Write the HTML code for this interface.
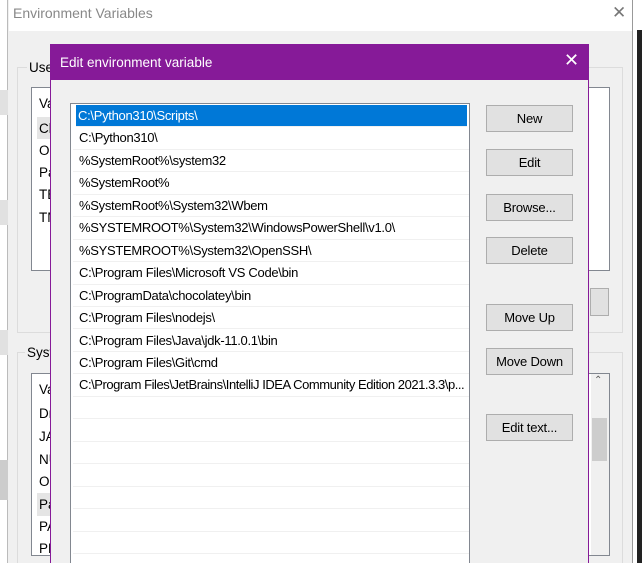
<!DOCTYPE html>
<html style="overflow:hidden;height:563px"><head><meta charset="utf-8"><style>
*{margin:0;padding:0;box-sizing:border-box}
body{width:642px;height:563px;overflow:hidden;position:relative;background:#f0f0f0;font-family:"Liberation Sans",sans-serif;font-size:12px;color:#000}
.a{position:absolute}
.t{white-space:nowrap}
.btn{position:absolute;left:486px;width:87px;height:27px;background:#e1e1e1;border:1px solid #adadad;text-align:center;line-height:25px;font-size:13px;letter-spacing:-0.2px}
.row{position:absolute;left:2px;width:396px;height:22.45px;border-bottom:1px solid #f0f0f0;line-height:22px;padding-left:6px;white-space:nowrap;overflow:hidden;letter-spacing:-0.3px;font-size:13px}
.bg{position:absolute;left:39px;white-space:nowrap;font-size:13.5px}
</style></head><body>
<div class="a" style="left:0;top:0;width:8px;height:563px;background:#fff;border-right:1px solid #bbb"></div>
<div class="a" style="left:0;top:90px;width:8px;height:25px;background:#e1e1e1"></div>
<div class="a" style="left:0;top:200px;width:8px;height:25px;background:#e1e1e1"></div>
<div class="a" style="left:0;top:330px;width:8px;height:25px;background:#e1e1e1"></div>
<div class="a" style="left:0;top:460px;width:8px;height:40px;background:#ccc"></div>
<div class="a" style="left:9px;top:0;width:623px;height:563px;background:#f0f0f0"></div>
<div class="a" style="left:9px;top:0;width:623px;height:31px;background:#fff"></div>
<div class="a t" style="left:13px;top:5px;font-size:14px;color:#888">Environment Variables</div>
<div class="a" style="left:612px;top:3px;font-size:17px;color:#777">✕</div>
<div class="a" style="left:632px;top:0;width:10px;height:563px;background:#fff;border-left:1px solid #999"></div>
<div class="a" style="left:637px;top:30px;width:5px;height:533px;background:#222"></div>
<div class="a" style="left:17px;top:67px;width:606px;height:266px;border:1px solid #dcdcdc"></div>
<div class="a t" style="left:27px;top:60px;background:#f0f0f0;padding:0 2px;font-size:13.5px">User</div>
<div class="a" style="left:31px;top:87px;width:579px;height:184px;background:#fff;border:1px solid #828790"></div>
<div class="bg" style="top:96px">Va</div>
<div class="a" style="left:37px;top:117px;width:20px;height:22px;background:#e5e5e5"></div>
<div class="bg" style="top:121px">Ch</div>
<div class="bg" style="top:143px">Or</div>
<div class="bg" style="top:165px">Pa</div>
<div class="bg" style="top:187px">TE</div>
<div class="bg" style="top:210px">TM</div>
<div class="a" style="left:590px;top:288px;width:19px;height:28px;background:#e1e1e1;border:1px solid #adadad"></div>
<div class="a" style="left:17px;top:352px;width:606px;height:211px;border:1px solid #dcdcdc;border-bottom:none"></div>
<div class="a t" style="left:25px;top:345px;background:#f0f0f0;padding:0 2px;font-size:13.5px">Syste</div>
<div class="a" style="left:31px;top:373px;width:579px;height:183px;background:#fff;border:1px solid #828790"></div>
<div class="bg" style="top:382px">Va</div>
<div class="bg" style="top:406px">Dr</div>
<div class="bg" style="top:429px">JA</div>
<div class="bg" style="top:452px">NU</div>
<div class="bg" style="top:474px">OS</div>
<div class="a" style="left:37px;top:493px;width:20px;height:23px;background:#e5e5e5"></div>
<div class="bg" style="top:497px">Pa</div>
<div class="bg" style="top:519px">PA</div>
<div class="bg" style="top:541px">PR</div>
<div class="a" style="left:591px;top:374px;width:18px;height:181px;background:#f0f0f0"></div>
<div class="a" style="left:594px;top:375px;font-size:10px;color:#606060">⌃</div>
<div class="a" style="left:592px;top:418px;width:15px;height:43px;background:#cdcdcd"></div>
<div class="a" style="left:50px;top:44px;width:539px;height:519px;background:#f0f0f0;border:1px solid #861a98;border-bottom:none"></div>
<div class="a" style="left:50px;top:44px;width:539px;height:36px;background:#861a98"></div>
<div class="a t" style="left:60px;top:55px;color:#fff;font-size:13.5px">Edit environment variable</div>
<div class="a" style="left:564px;top:50px;color:#fff;font-size:18px">✕</div>
<div class="a" style="left:70px;top:103px;width:400px;height:460px;background:#fff;border:1px solid #828790;border-bottom:none;overflow:hidden">
<div class="row" style="top:1px;left:5px;width:391px;background:#0078d7;color:#fff;padding-left:2px">C:\Python310\Scripts\</div>
<div class="row" style="top:23.45px">C:\Python310\</div>
<div class="row" style="top:45.9px">%SystemRoot%\system32</div>
<div class="row" style="top:68.35px">%SystemRoot%</div>
<div class="row" style="top:90.8px">%SystemRoot%\System32\Wbem</div>
<div class="row" style="top:113.25px">%SYSTEMROOT%\System32\WindowsPowerShell\v1.0\</div>
<div class="row" style="top:135.7px">%SYSTEMROOT%\System32\OpenSSH\</div>
<div class="row" style="top:158.15px">C:\Program Files\Microsoft VS Code\bin</div>
<div class="row" style="top:180.6px">C:\ProgramData\chocolatey\bin</div>
<div class="row" style="top:203.05px">C:\Program Files\nodejs\</div>
<div class="row" style="top:225.5px">C:\Program Files\Java\jdk-11.0.1\bin</div>
<div class="row" style="top:247.95px">C:\Program Files\Git\cmd</div>
<div class="row" style="top:270.4px;letter-spacing:-0.45px">C:\Program Files\JetBrains\IntelliJ IDEA Community Edition 2021.3.3\p...</div>
<div class="row" style="top:292.85px"></div>
<div class="row" style="top:315.3px"></div>
<div class="row" style="top:337.75px"></div>
<div class="row" style="top:360.2px"></div>
<div class="row" style="top:382.65px"></div>
<div class="row" style="top:405.1px"></div>
<div class="row" style="top:427.55px"></div>
</div>
<div class="btn" style="top:105px">New</div>
<div class="btn" style="top:149px">Edit</div>
<div class="btn" style="top:194px">Browse...</div>
<div class="btn" style="top:237px">Delete</div>
<div class="btn" style="top:304px">Move Up</div>
<div class="btn" style="top:348px">Move Down</div>
<div class="btn" style="top:414px">Edit text...</div>
</body></html>
